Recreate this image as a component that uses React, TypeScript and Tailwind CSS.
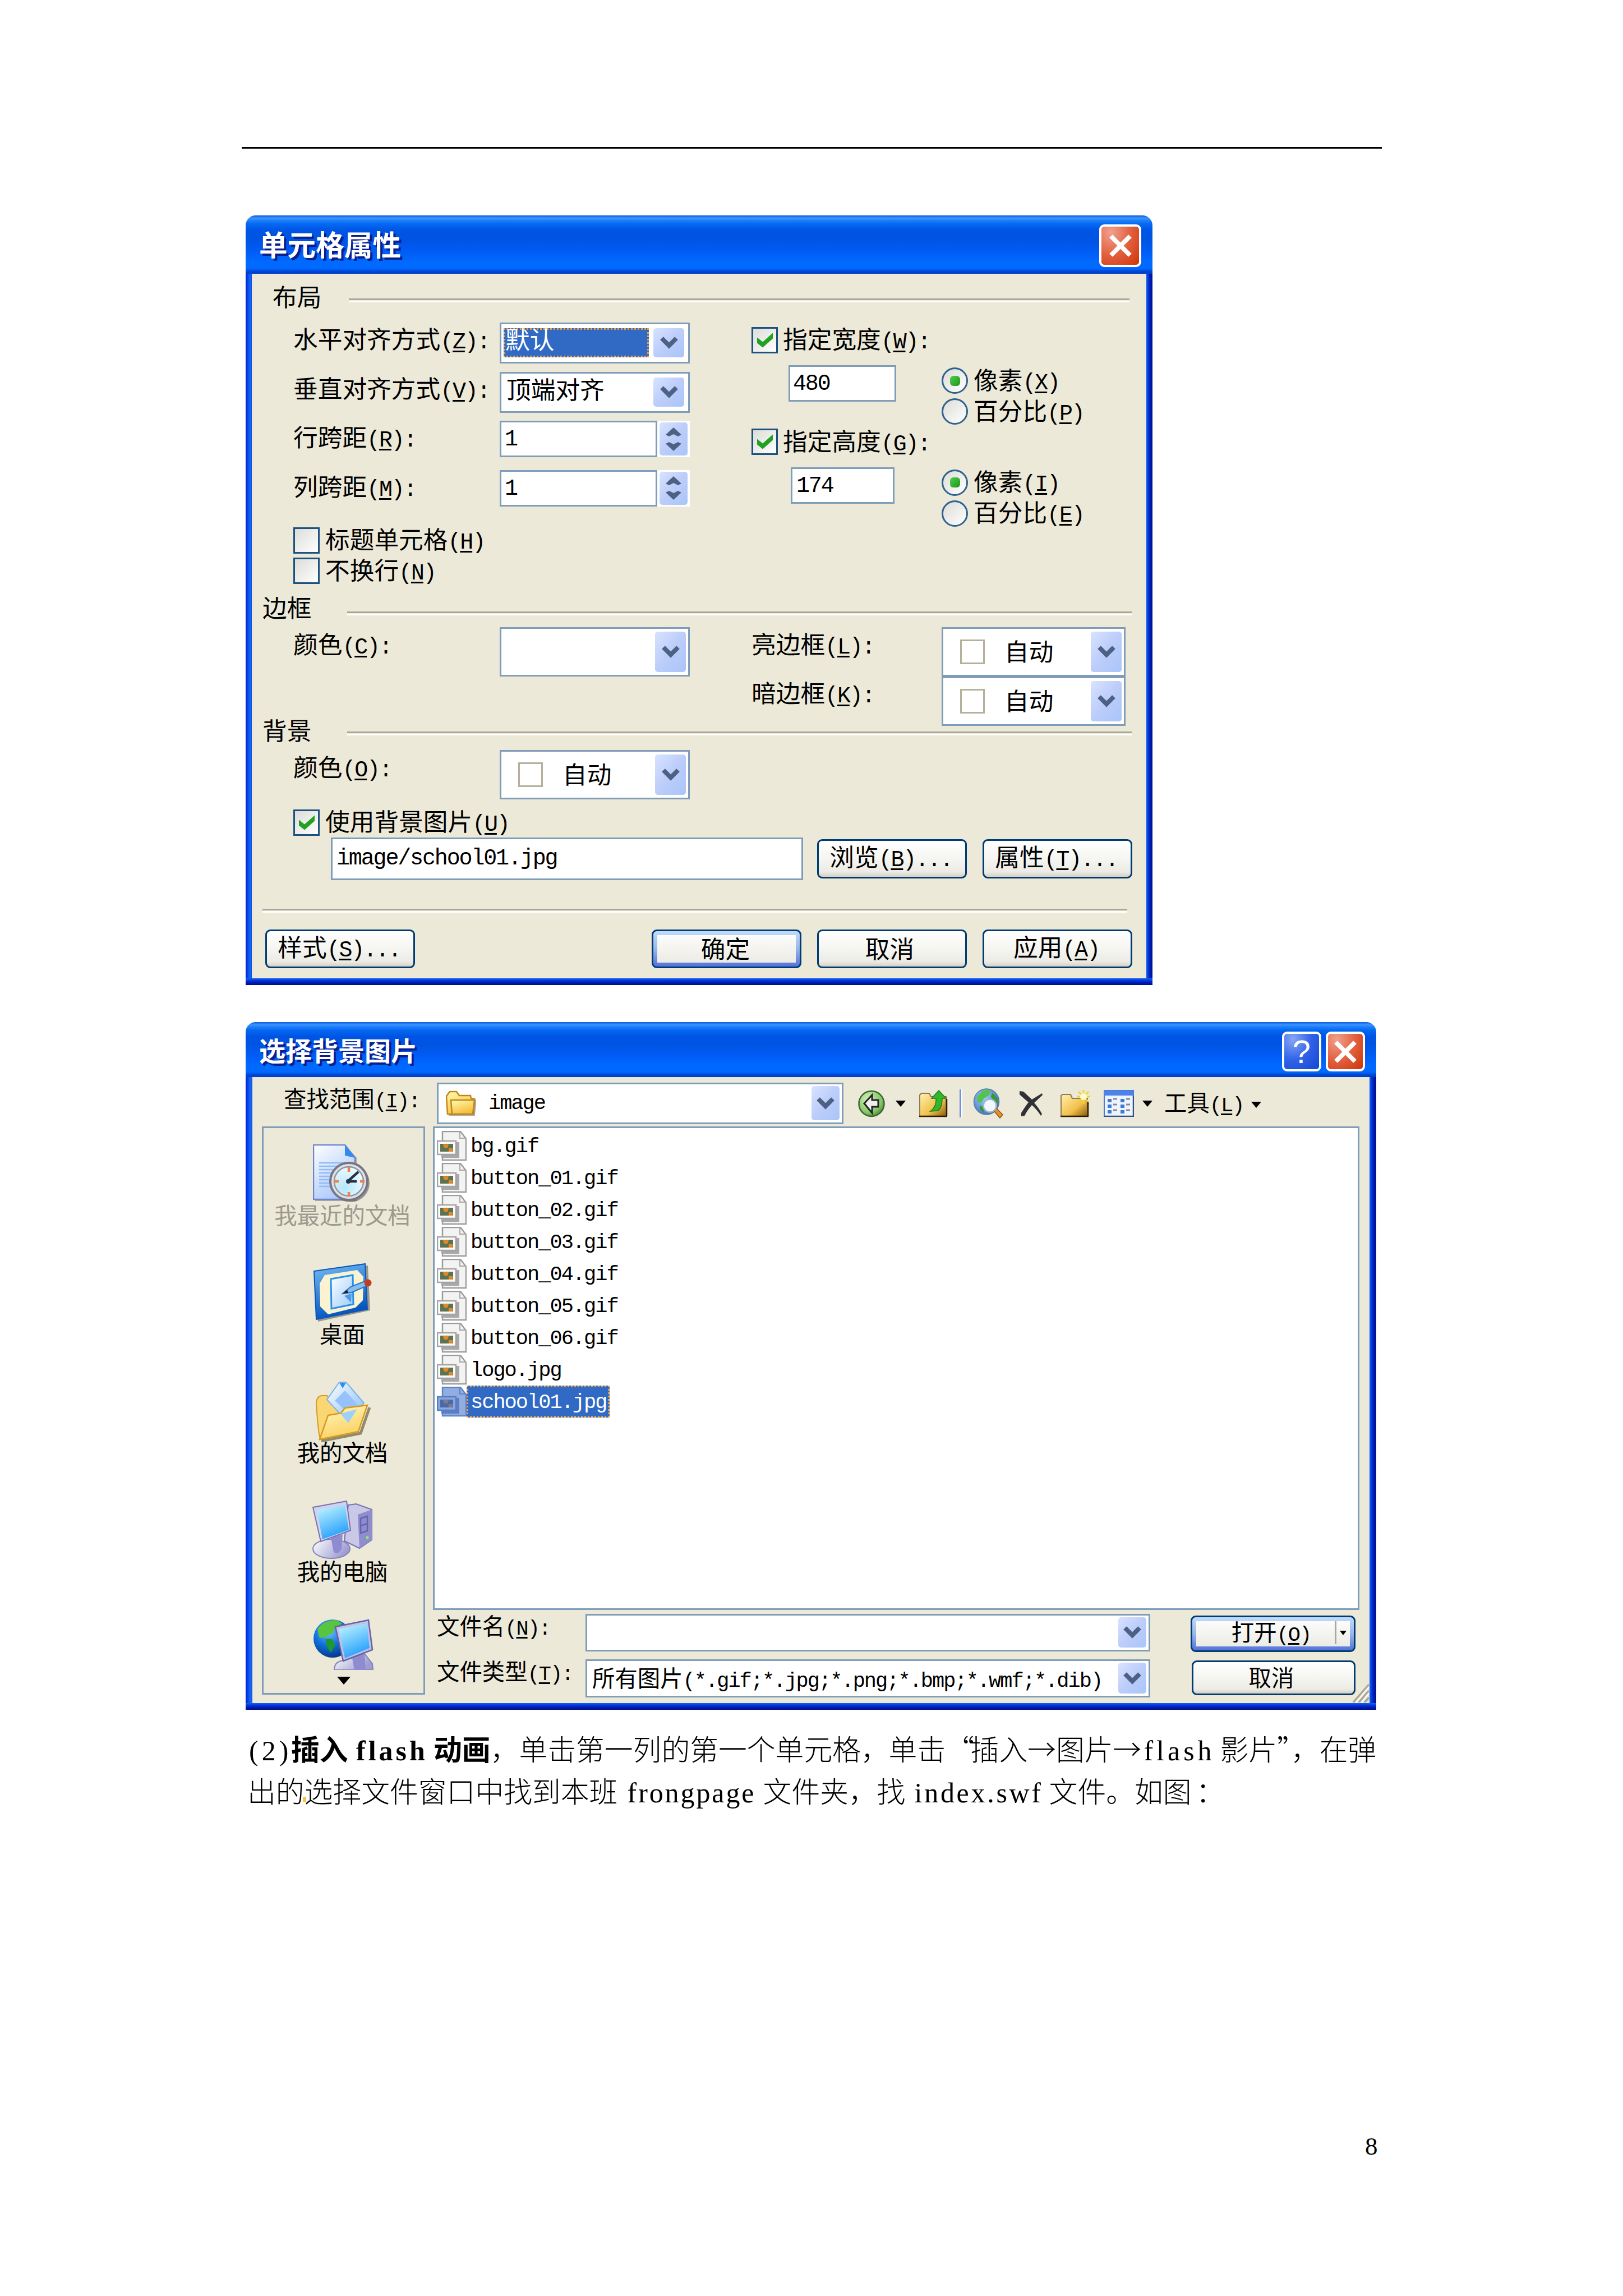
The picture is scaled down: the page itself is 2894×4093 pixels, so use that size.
import type { ReactNode } from "react";
import clsx from "clsx";

const MONO = "font-['Liberation_Mono','Noto_Sans_CJK_SC',monospace]";

/* Text: CJK glyphs stay full width, ASCII runs take half a cell each */

function Big({ children }: { children: string }) {
  return (
    <span className={clsx(MONO, "text-[40px] leading-none tracking-[-2.15px]")}>
      {children}
    </span>
  );
}

function Small({ children }: { children: string }) {
  return (
    <span className={clsx(MONO, "text-[37px] leading-none tracking-[-2px]")}>
      {children}
    </span>
  );
}

type LabelProps = {
  text: string;
  hotkey?: string;
  tail?: string;
  small?: boolean;
  className?: string;
};

function Label({ text, hotkey, tail = "", small, className }: LabelProps) {
  return (
    <span
      className={clsx(
        "shrink-0 whitespace-nowrap leading-none",
        small ? "text-[40.4px]" : "text-[43.7px]",
        className,
      )}
    >
      {text}
      {hotkey && (
        <span
          className={clsx(
            MONO,
            "leading-none",
            small
              ? "text-[37px] tracking-[-2px]"
              : "text-[40px] tracking-[-2.15px]",
          )}
        >
          (
          <span className="underline decoration-[3px] underline-offset-[4px]">
            {hotkey}
          </span>
          ){tail}
        </span>
      )}
    </span>
  );
}

/* Window chrome */

function CloseButton({ className }: { className: string }) {
  return (
    <div
      className={clsx(
        "flex items-center justify-center rounded-[9px] border-[4px] border-white bg-radial-[at_25%_15%] from-[#f0a08c] via-[#e2603f] to-[#cf3408]",
        className,
      )}
    >
      <svg viewBox="0 0 40 40" className="h-[40px] w-[40px]">
        <path d="M3 3 37 37M37 3 3 37" stroke="#fff" strokeWidth="8" />
      </svg>
    </div>
  );
}

type WindowProps = {
  title: ReactNode;
  buttons: ReactNode;
  className: string;
  titleClass: string;
  edgeClass: string;
  children: ReactNode;
};

function Window({
  title,
  buttons,
  className,
  titleClass,
  edgeClass,
  children,
}: WindowProps) {
  return (
    <section
      className={clsx(
        "flex flex-col overflow-hidden rounded-t-[18px] bg-[#ece9d8]",
        className,
      )}
    >
      <header
        className={clsx(
          "flex shrink-0 justify-between bg-[linear-gradient(180deg,#0a5be0_0%,#3b95ff_5%,#1d7dfb_9%,#0468f2_15%,#0054e3_26%,#0054e3_42%,#005cf6_62%,#006aff_80%,#0068ff_91%,#0046d4_96%,#003cc8_100%)] font-bold leading-none text-white",
          titleClass,
        )}
      >
        {title}
        {buttons}
      </header>
      <div className="flex min-h-0 flex-1">
        <div
          className={clsx(
            "shrink-0 bg-[linear-gradient(90deg,#0021d2,#0a4ae8_40%,#1768f6_75%,#0a50e0)]",
            edgeClass,
          )}
        />
        <div className="min-w-0 flex-1">{children}</div>
        <div
          className={clsx(
            "shrink-0 bg-[linear-gradient(90deg,#1460ee,#003de0_30%,#0019b0_65%,#00108c)]",
            edgeClass,
          )}
        />
      </div>
      <div className="h-[12px] shrink-0 bg-[linear-gradient(180deg,#1460ee,#003de0_30%,#0019b0_65%,#00108c)]" />
    </section>
  );
}

/* Controls */

function Rule({ className }: { className: string }) {
  return (
    <div
      className={clsx(
        "h-[7px] border-t-[3.5px] border-b-[3.5px] border-t-[#aca899] border-b-white",
        className,
      )}
    />
  );
}

function DropButton({ className }: { className: string }) {
  return (
    <div
      className={clsx(
        "flex shrink-0 items-center justify-center rounded-[5px] bg-linear-to-br from-[#d8e3ff] via-[#bccdfa] to-[#a9c5f9]",
        className,
      )}
    >
      <svg viewBox="0 0 32 22" className="h-[22px] w-[32px]">
        <path d="M3 3 16 16 29 3" fill="none" stroke="#4d6185" strokeWidth="8" />
      </svg>
    </div>
  );
}

function Combo({
  className,
  button,
  children,
}: {
  className: string;
  button: string;
  children?: ReactNode;
}) {
  return (
    <div
      className={clsx(
        "flex shrink-0 justify-between border-[3.5px] border-[#7f9db9] bg-white",
        className,
      )}
    >
      <div className="flex min-w-0 flex-1">{children}</div>
      <DropButton className={button} />
    </div>
  );
}

function AutoColor() {
  return (
    <>
      <div className="mt-[14px] ml-[30px] h-[44px] w-[44px] shrink-0 border-[3.5px] border-[#b5b09c]" />
      <Label text="自动" className="mt-[12px] ml-[35px]" />
    </>
  );
}

function Spinner() {
  return (
    <div className="flex h-[65px] w-[58px] flex-col bg-white px-[4px] py-[3px]">
      <div className="flex h-[59px] flex-col items-center justify-center gap-[10px] rounded-[5px] bg-linear-to-br from-[#d8e3ff] via-[#bccdfa] to-[#a9c5f9]">
        <svg viewBox="0 0 28 16" className="h-[16px] w-[28px]">
          <path d="M14 0 28 13 22 16 14 12 6 16 0 13Z" fill="#4d6185" />
        </svg>
        <svg viewBox="0 0 28 16" className="h-[16px] w-[28px]">
          <path d="M14 16 0 3 6 0 14 4 22 0 28 3Z" fill="#4d6185" />
        </svg>
      </div>
    </div>
  );
}

function Check({ checked }: { checked?: boolean }) {
  return (
    <div className="flex h-[47px] w-[47px] shrink-0 items-center justify-center border-[3.5px] border-[#1c5180] bg-linear-to-br from-[#dcdcd7] to-white">
      {checked && (
        <svg viewBox="0 0 28 26" className="h-[27px] w-[28px]">
          <path d="M0 8 10 16 28 0V10L10 26 0 18Z" fill="#21a121" />
        </svg>
      )}
    </div>
  );
}

function Radio({ checked }: { checked?: boolean }) {
  return (
    <div className="flex h-[47px] w-[47px] shrink-0 items-center justify-center rounded-full border-[3.5px] border-[#2f6291] bg-linear-to-br from-[#dcdcd7] to-white">
      {checked && (
        <div className="h-[18px] w-[18px] rounded-[6px] bg-linear-to-br from-[#4fce4c] to-[#1c951c]" />
      )}
    </div>
  );
}

function Button({
  className,
  primary,
  children,
}: {
  className: string;
  primary?: boolean;
  children: ReactNode;
}) {
  return (
    <div
      className={clsx(
        "flex shrink-0 items-center justify-center rounded-[9px] border-[3.5px] border-[#003c74]",
        primary
          ? "bg-linear-to-b from-[#c2dbfc] via-[#98b8ea] to-[#5572d8] p-[7px]"
          : "bg-[linear-gradient(180deg,#fff_0%,#f5f5f1_50%,#ecebe5_86%,#d6d0c5_100%)] pb-[4px]",
        className,
      )}
    >
      {primary ? (
        <div className="flex h-full w-full items-center justify-center bg-linear-to-b from-[#fcfcfb] to-[#ecebe5] pb-[4px]">
          {children}
        </div>
      ) : (
        children
      )}
    </div>
  );
}

/* Cell properties dialog */

function FieldRow({ label, hotkey, children }: { label: string; hotkey: string; children: ReactNode }) {
  return (
    <div className="flex h-[87.5px] items-start">
      <div className="flex h-[62px] w-[368px] items-center">
        <Label text={label} hotkey={hotkey} tail=":" />
      </div>
      {children}
    </div>
  );
}

function SizeBlock({
  label,
  hotkey,
  units,
  children,
}: {
  label: string;
  hotkey: string;
  units: [string, string];
  children: ReactNode;
}) {
  return (
    <div className="h-[181.5px]">
      <div className="flex h-[62px] items-center">
        <Check checked />
        <Label text={label} hotkey={hotkey} tail=":" className="ml-[9px]" />
      </div>
      <div className="mt-[14px] flex">
        <div className="w-[339px]">{children}</div>
        <div>
          <div className="flex h-[55px] items-center">
            <Radio checked />
            <Label text="像素" hotkey={units[0]} className="ml-[10px]" />
          </div>
          <div className="flex h-[55px] items-center">
            <Radio />
            <Label text="百分比" hotkey={units[1]} className="ml-[10px]" />
          </div>
        </div>
      </div>
    </div>
  );
}

function CellDialog() {
  return (
    <Window
      className="ml-[438px] h-[1372px] w-[1617px]"
      titleClass="h-[104px] pr-[20px] pl-[24px] pt-[16px]"
      edgeClass="w-[11px]"
      title={
        <h1 className="mt-[9px] text-[50.6px] [text-shadow:4px_4px_0_#0a1f8f]">
          单元格属性
        </h1>
      }
      buttons={<CloseButton className="h-[76px] w-[75px]" />}
    >
      <div className="flex h-[84px] items-center pl-[37px]">
        <Label text="布局" className="mb-[5px] w-[136px]" />
        <Rule className="mt-[10px] w-[1392px]" />
      </div>

      <div className="flex h-[479px] pt-[3px] pl-[74px]">
        <div className="w-[817px]">
          <FieldRow label="水平对齐方式" hotkey="Z">
            <Combo
              className="h-[73px] w-[339px] p-[7px] pl-[4px]"
              button="w-[55px] h-[52px]"
            >
              <div className="h-[52px] w-[259px] border-[3px] border-dotted border-[#e8a040] bg-[#316ac5] text-white">
                <Label text="默认" className="-mt-[6px] block" />
              </div>
            </Combo>
          </FieldRow>
          <FieldRow label="垂直对齐方式" hotkey="V">
            <Combo
              className="h-[73px] w-[339px] p-[7px] pl-[9px]"
              button="w-[55px] h-[52px]"
            >
              <Label text="顶端对齐" className="-mt-[2px]" />
            </Combo>
          </FieldRow>
          <FieldRow label="行跨距" hotkey="R">
            <div className="flex h-[65px] w-[281px] items-center border-[3.5px] border-[#7f9db9] bg-white pt-[3px] pl-[6px]">
              <Big>1</Big>
            </div>
            <Spinner />
          </FieldRow>
          <FieldRow label="列跨距" hotkey="M">
            <div className="flex h-[65px] w-[281px] items-center border-[3.5px] border-[#7f9db9] bg-white pt-[3px] pl-[6px]">
              <Big>1</Big>
            </div>
            <Spinner />
          </FieldRow>
          <div className="mt-[11px] flex h-[54.5px] items-center">
            <Check />
            <Label text="标题单元格" hotkey="H" className="ml-[10px]" />
          </div>
          <div className="flex h-[54.5px] items-center">
            <Check />
            <Label text="不换行" hotkey="N" className="ml-[10px]" />
          </div>
        </div>
        <div>
          <SizeBlock label="指定宽度" hotkey="W" units={["X", "P"]}>
            <div className="ml-[66px] flex h-[65px] w-[192px] items-center border-[3.5px] border-[#7f9db9] bg-white pt-[3px] pl-[5px]">
              <Big>480</Big>
            </div>
          </SizeBlock>
          <SizeBlock label="指定高度" hotkey="G" units={["I", "E"]}>
            <div className="ml-[70px] flex h-[65px] w-[185px] items-center border-[3.5px] border-[#7f9db9] bg-white pt-[3px] pl-[7px]">
              <Big>174</Big>
            </div>
          </SizeBlock>
        </div>
      </div>

      <div className="mt-[4px] flex h-[57px] items-center pl-[19px]">
        <Label text="边框" className="mb-[4px] w-[151px]" />
        <Rule className="mt-[19px] w-[1399px]" />
      </div>
      <div className="mt-[6px] flex h-[156px] pl-[74px]">
        <div className="flex h-[64px] w-[368px] items-center">
          <Label text="颜色" hotkey="C" tail=":" />
        </div>
        <Combo
          className="h-[88px] w-[339px] py-[4.5px] pr-[4px]"
          button="w-[55px] h-[72px]"
        />
        <div className="ml-[110px] w-[339px]">
          <div className="flex h-[64px] items-center">
            <Label text="亮边框" hotkey="L" tail=":" />
          </div>
          <div className="mt-[23px] flex h-[64px] items-center">
            <Label text="暗边框" hotkey="K" tail=":" />
          </div>
        </div>
        <div>
          <Combo
            className="h-[88px] w-[328px] py-[4.5px] pr-[4px]"
            button="w-[55px] h-[72px]"
          >
            <AutoColor />
          </Combo>
          <Combo
            className="h-[88px] w-[328px] py-[4.5px] pr-[4px]"
            button="w-[55px] h-[72px]"
          >
            <AutoColor />
          </Combo>
        </div>
      </div>

      <div className="flex h-[57px] items-center pl-[19px]">
        <Label text="背景" className="mb-[4px] w-[151px]" />
        <Rule className="mt-[10px] w-[1399px]" />
      </div>
      <div className="mt-[6px] flex h-[102px] pl-[74px]">
        <div className="flex h-[64px] w-[368px] items-center">
          <Label text="颜色" hotkey="O" tail=":" />
        </div>
        <Combo
          className="h-[88px] w-[339px] py-[4.5px] pr-[4px]"
          button="w-[55px] h-[72px]"
        >
          <AutoColor />
        </Combo>
      </div>
      <div className="flex h-[54px] items-center pl-[74px]">
        <Check checked />
        <Label text="使用背景图片" hotkey="U" className="ml-[10px]" />
      </div>
      <div className="flex h-[76px] items-center pl-[141px]">
        <div className="flex h-[76px] w-[842px] items-center border-[3.5px] border-[#7f9db9] bg-white pl-[7px]">
          <Big>image/school01.jpg</Big>
        </div>
        <Button className="ml-[25px] h-[70px] w-[267px]">
          <Label text="浏览" hotkey="B" tail="..." className="mr-[4px]" />
        </Button>
        <Button className="ml-[28px] h-[70px] w-[267px]">
          <Label text="属性" hotkey="T" tail="..." className="mr-[4px]" />
        </Button>
      </div>

      <Rule className="mt-[51px] ml-[19px] w-[1542px]" />
      <div className="mt-[30px] flex pl-[24px]">
        <Button className="h-[69px] w-[267px]">
          <Label text="样式" hotkey="S" tail="..." className="mr-[4px]" />
        </Button>
        <Button primary className="ml-[422px] h-[69px] w-[267px]">
          <Label text="确定" className="mr-[4px]" />
        </Button>
        <Button className="ml-[28px] h-[69px] w-[267px]">
          <Label text="取消" className="mr-[8px]" />
        </Button>
        <Button className="ml-[28px] h-[69px] w-[267px]">
          <Label text="应用" hotkey="A" className="mr-[4px]" />
        </Button>
      </div>
    </Window>
  );
}

/* Places bar icons */

function RecentIcon() {
  return (
    <svg viewBox="0 0 108 104" className="h-[104px] w-[108px]">
      <defs>
        <linearGradient id="recentPage" x1="0" y1="0" x2="0.6" y2="1">
          <stop offset="0" stopColor="#fff" />
          <stop offset="1" stopColor="#a9c6fb" />
        </linearGradient>
        <radialGradient id="recentFace" cx="0.35" cy="0.7" r="0.8">
          <stop offset="0" stopColor="#b5e6fb" />
          <stop offset="1" stopColor="#f7fdff" />
        </radialGradient>
      </defs>
      <path d="M4 4H60L78 24V101H4Z" fill="#5c5c66" opacity="0.45" />
      <path d="M1 1H57L75 24V98H1Z" fill="url(#recentPage)" stroke="#6f83cf" strokeWidth="2.5" />
      <path d="M57 1 75 24 57 20Z" fill="#2d8cf0" />
      <path d="M11 33H58M11 39H55M11 45H50M11 51H42M11 57H38M11 63H34M11 69H32M11 75H31" stroke="#8fbcf7" strokeWidth="2.6" />
      <circle cx="67" cy="69" r="34" fill="#50505a" opacity="0.55" />
      <circle cx="64" cy="66" r="33" fill="#dfe0e6" stroke="#74757f" strokeWidth="4" />
      <circle cx="64" cy="66" r="26" fill="url(#recentFace)" stroke="#8b97a5" strokeWidth="2.5" />
      <path d="M64 41V49M64 85V93M37 66H46M84 66H92" stroke="#f08048" strokeWidth="4.5" />
      <path d="M62 66 81 49M62 66H78" stroke="#263445" strokeWidth="4.5" />
      <circle cx="63" cy="66" r="4" fill="#263445" />
    </svg>
  );
}

function DesktopIcon() {
  return (
    <svg viewBox="0 0 108 104" className="h-[104px] w-[108px]">
      <defs>
        <linearGradient id="deskBlue" x1="0" y1="0" x2="0.3" y2="1">
          <stop offset="0" stopColor="#74bdf5" />
          <stop offset="1" stopColor="#0553bd" />
        </linearGradient>
        <linearGradient id="deskPage" x1="0" y1="0" x2="1" y2="1">
          <stop offset="0" stopColor="#fff" />
          <stop offset="1" stopColor="#9ccbfb" />
        </linearGradient>
      </defs>
      <path d="M5 16 97 4 101 84 8 104Z" fill="#333" opacity="0.45" />
      <path d="M1 14 92 1 96 82 5 100Z" fill="url(#deskBlue)" stroke="#0b56b8" strokeWidth="2" />
      <path d="M20 21 78 12 89 24 88 66 75 79 26 91 12 77 11 36Z" fill="#fbf3cf" />
      <path d="M31 28 70 21 71 73 32 81Z" fill="url(#deskPage)" stroke="#2490ee" strokeWidth="3" />
      <path d="M52 54 66 42 94 31 98 39 68 52Z" fill="#86bdf0" stroke="#2c75c2" strokeWidth="2" />
      <path d="M52 54 60 47 62 53Z" fill="#222" />
      <path d="M55 58 68 54 67 70Z" fill="#4c9bea" />
      <circle cx="97" cy="35" r="6.5" fill="#c23c20" />
    </svg>
  );
}

function DocumentsIcon() {
  return (
    <svg viewBox="0 0 98 108" className="h-[108px] w-[98px]">
      <defs>
        <linearGradient id="docsFront" x1="0" y1="0" x2="0.4" y2="1">
          <stop offset="0" stopColor="#fffac2" />
          <stop offset="1" stopColor="#fbd061" />
        </linearGradient>
        <linearGradient id="docsPage" x1="0" y1="0" x2="1" y2="1">
          <stop offset="0" stopColor="#fff" />
          <stop offset="1" stopColor="#7fb9f8" />
        </linearGradient>
      </defs>
      <path d="M10 106 80 92 96 46" fill="none" stroke="#4a3d10" strokeWidth="5" opacity="0.55" />
      <path d="M1 38Q2 26 10 25H20L44 56 8 102Q4 90 1 38Z" fill="#fbd773" stroke="#d69a1e" strokeWidth="2" />
      <path d="M42 1H54L86 38 58 74 20 32Z" fill="url(#docsPage)" stroke="#7fb0ea" strokeWidth="2" />
      <path d="M42 2H54L48 12Z" fill="#2790f4" />
      <path d="M52 16 76 42 60 58 34 34Z" fill="#95c2fa" />
      <path d="M22 60 45 56 52 47 92 42 76 89 7 103Z" fill="url(#docsFront)" stroke="#d69a1e" strokeWidth="2.5" />
      <path d="M44 57 74 49 58 74Z" fill="#9fd0f8" />
    </svg>
  );
}

function ComputerIcon() {
  return (
    <svg viewBox="0 0 110 106" className="h-[106px] w-[110px]">
      <defs>
        <linearGradient id="pcScreen" x1="0.2" y1="0" x2="0.6" y2="1">
          <stop offset="0" stopColor="#bdf3ff" />
          <stop offset="1" stopColor="#1f9cfb" />
        </linearGradient>
        <linearGradient id="pcBase" x1="0" y1="0" x2="1" y2="0.4">
          <stop offset="0" stopColor="#fff" />
          <stop offset="1" stopColor="#9d9cd4" />
        </linearGradient>
      </defs>
      <path d="M64 8 78 6 106 16V70L84 85 57 72Z" fill="#c9c8e6" stroke="#7472b4" strokeWidth="2" />
      <path d="M81 25 106 16V70L84 85Z" fill="#8f8dcc" />
      <path d="M86 32 98 28V54L86 58ZM86 45 98 41" fill="none" stroke="#6664ae" strokeWidth="2.5" />
      <circle cx="98" cy="66" r="2.5" fill="#8cf06a" />
      <ellipse cx="34" cy="86" rx="33" ry="17" fill="url(#pcBase)" stroke="#8583b5" strokeWidth="2" />
      <path d="M33 66 54 60 52 86Q46 98 38 92Z" fill="#8e8cce" />
      <path d="M1 12 61 1 68 53 15 73Z" fill="#d3d2ec" stroke="#7472b4" strokeWidth="2" />
      <path d="M8 17 58 8 65 52 18 69Z" fill="url(#pcScreen)" />
    </svg>
  );
}

function NetworkIcon() {
  return (
    <svg viewBox="0 0 110 91" className="h-[91px] w-[110px] shrink-0">
      <defs>
        <radialGradient id="netGlobe" cx="0.4" cy="0.3" r="0.75">
          <stop offset="0" stopColor="#7cc7fb" />
          <stop offset="0.5" stopColor="#1272dd" />
          <stop offset="1" stopColor="#03317f" />
        </radialGradient>
      </defs>
      <circle cx="35" cy="35" r="34" fill="url(#netGlobe)" />
      <path d="M8 18Q20 2 42 2L52 8 40 16 34 26 22 32 12 34Z" fill="#57c53e" />
      <path d="M22 36 34 36 40 46 32 60 26 52Z" fill="#1c9a2c" />
      <path d="M38 91Q38 76 54 74L92 62 106 80 107 91Z" fill="url(#pcBase)" stroke="#8583b5" strokeWidth="2" />
      <path d="M70 70 92 62 94 91H74Z" fill="#8e8cce" />
      <path d="M40 14 99 2 106 55 54 75Z" fill="#c3c2e2" stroke="#6462a8" strokeWidth="2.5" />
      <path d="M46 18 96 8 101 52 57 70Z" fill="url(#pcScreen)" />
    </svg>
  );
}

function ImageFileIcon({ selected }: { selected?: boolean }) {
  return (
    <svg viewBox="0 0 53 54" className="h-[54px] w-[53px] shrink-0">
      <path
        d="M10 1H42L52 14V52H10Z"
        fill={selected ? "#93ade0" : "#f3f3f3"}
        stroke={selected ? "#5f83cb" : "#9b9b9b"}
        strokeWidth="2.5"
      />
      <path d="M41 1V13H52" fill="none" stroke={selected ? "#5f83cb" : "#a8a8a8"} strokeWidth="2" />
      <path d="M8 20H40V48H8Z" fill={selected ? "#5c7fc4" : "#a8a8a8"} />
      <path
        d="M1 18H34V42H1Z"
        fill={selected ? "#8ba6dc" : "#fafafa"}
        stroke={selected ? "#557cc8" : "#a3a3a3"}
        strokeWidth="2.5"
      />
      <path d="M6 23H29V37H6Z" fill={selected ? "#4a6aa6" : "#5d7350"} />
      <path d="M11 24H21L19 30H13ZM21 31H28V37H21Z" fill={selected ? "#7d7b93" : "#e6882a"} />
    </svg>
  );
}

/* Toolbar icons */

function FolderIcon() {
  return (
    <svg viewBox="0 0 54 46" className="h-[46px] w-[54px]">
      <defs>
        <linearGradient id="folderFill" x1="0" y1="0" x2="0.5" y2="1">
          <stop offset="0" stopColor="#fffdb0" />
          <stop offset="1" stopColor="#f5bd3c" />
        </linearGradient>
      </defs>
      <path d="M5 43H50L53 16" fill="none" stroke="#555" strokeWidth="4" opacity="0.5" />
      <path d="M1 10 7 2H19L24 9H44L45 14 51 15 49 42H3Z" fill="url(#folderFill)" stroke="#c1861a" strokeWidth="2.5" />
      <path d="M9 17H51L48 42H11Z" fill="url(#folderFill)" stroke="#c1861a" strokeWidth="2.5" />
    </svg>
  );
}

function Caret({ className }: { className?: string }) {
  return (
    <svg viewBox="0 0 18 11" className={clsx("h-[11px] w-[18px] shrink-0", className)}>
      <path d="M0 0H18L9 11Z" fill="#000" />
    </svg>
  );
}

function BackIcon() {
  return (
    <svg viewBox="0 0 48 49" className="h-[49px] w-[48px] shrink-0">
      <defs>
        <radialGradient id="backFill" cx="0.35" cy="0.3" r="0.8">
          <stop offset="0" stopColor="#cdf0b4" />
          <stop offset="0.7" stopColor="#82c566" />
          <stop offset="1" stopColor="#3f7a30" />
        </radialGradient>
      </defs>
      <circle cx="24" cy="24.5" r="22.5" fill="url(#backFill)" stroke="#3b6633" strokeWidth="2.5" />
      <path d="M11 24 25 9V18H36V30H25V41Z" fill="#eee" stroke="#222" strokeWidth="3" />
    </svg>
  );
}

function UpIcon() {
  return (
    <svg viewBox="0 0 52 49" className="h-[49px] w-[52px] shrink-0">
      <defs>
        <linearGradient id="toolFolder" x1="0" y1="0" x2="1" y2="1">
          <stop offset="0" stopColor="#fff0b0" />
          <stop offset="0.6" stopColor="#f1c04a" />
          <stop offset="1" stopColor="#8a5a08" />
        </linearGradient>
      </defs>
      <path d="M2 47V9L5 6H19L22 12H49V47Z" fill="url(#toolFolder)" stroke="#8f7a55" strokeWidth="2" />
      <path d="M1 47H51M50 16V47" stroke="#2a1a08" strokeWidth="2.5" />
      <path d="M36 1 49 15H42Q42 32 34 37L21 38Q32 30 31 15H23Z" fill="#33b52c" stroke="#1b7d1c" strokeWidth="1.5" />
    </svg>
  );
}

function SearchWebIcon() {
  return (
    <svg viewBox="0 0 54 54" className="h-[54px] w-[54px] shrink-0">
      <defs>
        <radialGradient id="webFill" cx="0.4" cy="0.35" r="0.75">
          <stop offset="0" stopColor="#9cd2fa" />
          <stop offset="1" stopColor="#3a68c0" />
        </radialGradient>
      </defs>
      <ellipse cx="24" cy="24" rx="22.5" ry="23" fill="url(#webFill)" stroke="#5c7a9c" strokeWidth="1.5" />
      <path d="M8 14 18 4 32 3 28 13 20 18 14 26 7 24Z" fill="#55c24b" />
      <path d="M34 8 43 16 45 28 36 22 32 15ZM12 30 18 34 20 44 12 38Z" fill="#359a3a" />
      <path d="M37 40 42 36 53 47 48 53Z" fill="#e0912f" stroke="#8f5310" strokeWidth="1.5" />
      <circle cx="30" cy="31" r="11.5" fill="#f1f7ff" stroke="#a3b4c8" strokeWidth="2.5" />
    </svg>
  );
}

function DeleteIcon() {
  return (
    <svg viewBox="0 0 44 47" className="h-[47px] w-[44px] shrink-0">
      <path d="M1 1 8 2 23 16 41 5 42 8 27 22Q36 32 41 42L39 45Q32 34 23 26 14 36 10 45L4 46 4 40Q12 27 17 21 6 12 1 7Z" fill="#2e3135" />
    </svg>
  );
}

function NewFolderIcon() {
  return (
    <svg viewBox="0 0 54 49" className="h-[49px] w-[54px] shrink-0">
      <path d="M2 47V10L5 8H19L22 15H49V47Z" fill="url(#toolFolder)" stroke="#8f7a55" strokeWidth="2" />
      <path d="M1 47H51M50 22V47" stroke="#2a1a08" strokeWidth="2.5" />
      <path d="M42 0V25M30 12H54M33 3 51 21M51 3 33 21" stroke="#f3cf3a" strokeWidth="3" />
      <circle cx="42" cy="12" r="6" fill="#fffbd0" />
    </svg>
  );
}

function ViewsIcon() {
  const cells = [16, 26, 36];
  return (
    <svg viewBox="0 0 54 48" className="h-[48px] w-[54px] shrink-0">
      <rect x="1" y="1" width="52" height="46" fill="#eef4ff" stroke="#4c78d0" strokeWidth="2" />
      <rect x="1" y="1" width="52" height="9" fill="#4c82ea" />
      <path d="M0 47H54M53 10V47" stroke="#32508c" strokeWidth="2.5" />
      {cells.map((y) => (
        <g key={y}>
          <path d={`M7 ${y + 6}V${y}H14V${y + 6}ZM30 ${y + 6}V${y}H37V${y + 6}Z`} fill="#3c78d8" />
          <path d={`M17 ${y}H24M40 ${y}H47`} stroke="#888" strokeWidth="3" />
        </g>
      ))}
    </svg>
  );
}

/* File picker dialog */

const places = [
  { label: "我最近的文档", icon: RecentIcon, muted: true },
  { label: "桌面", icon: DesktopIcon },
  { label: "我的文档", icon: DocumentsIcon },
  { label: "我的电脑", icon: ComputerIcon },
];

const files = [
  "bg.gif",
  "button_01.gif",
  "button_02.gif",
  "button_03.gif",
  "button_04.gif",
  "button_05.gif",
  "button_06.gif",
  "logo.jpg",
  "school01.jpg",
];

const selectedFile = "school01.jpg";

function FileDialog() {
  return (
    <Window
      className="mt-[66px] ml-[438px] h-[1226px] w-[2016px]"
      titleClass="h-[98px] pr-[20px] pl-[24px] pt-[17px]"
      edgeClass="w-[12px]"
      title={
        <h1 className="mt-[8px] text-[47px] [text-shadow:4px_4px_0_#0a1f8f]">
          选择背景图片
        </h1>
      }
      buttons={
        <div className="flex gap-[8px]">
          <div className="flex h-[71px] w-[70px] items-center justify-center rounded-[9px] border-[4px] border-white bg-radial-[at_25%_15%] from-[#87a6f5] via-[#2f62e8] to-[#1646d0] font-['Liberation_Sans',sans-serif] text-[58px] font-normal">
            ?
          </div>
          <CloseButton className="h-[71px] w-[70px]" />
        </div>
      }
    >
      <div className="flex h-[88px] pl-[56px]">
        <div className="flex h-[80px] w-[273px] items-center">
          <Label small text="查找范围" hotkey="I" tail=":" />
        </div>
        <Combo
          className="mt-[10px] h-[74px] w-[725px] py-[3px] pr-[4px]"
          button="w-[50px] h-[61px]"
        >
          <div className="flex items-center pl-[13px]">
            <FolderIcon />
            <span className="ml-[22px]">
              <Small>image</Small>
            </span>
          </div>
        </Combo>
        <div className="flex h-[94px] items-center">
          <div className="flex w-[111px] items-center gap-[19px] pl-[26px]">
            <BackIcon />
            <Caret />
          </div>
          <div className="ml-[23px]">
            <UpIcon />
          </div>
          <div className="ml-[21px] h-[50px] w-[5px] border-r-2 border-r-white bg-[#6f93dc]" />
          <div className="ml-[19px]">
            <SearchWebIcon />
          </div>
          <div className="ml-[28px]">
            <DeleteIcon />
          </div>
          <div className="ml-[29px]">
            <NewFolderIcon />
          </div>
          <div className="ml-[24px]">
            <ViewsIcon />
          </div>
          <Caret className="ml-[15px]" />
          <Label small text="工具" hotkey="L" className="ml-[21px]" />
          <Caret className="mt-[4px] ml-[14px]" />
        </div>
      </div>

      <div className="flex pl-[17px]">
        <aside className="flex h-[1013px] w-[291px] flex-col items-center border-[3.5px] border-[#7f9db9] pt-[29px]">
          {places.map(({ label, icon: Icon, muted }) => (
            <div key={label} className="flex h-[211.5px] shrink-0 flex-col items-center">
              <div className="h-[104px]">
                <Icon />
              </div>
              <Label small text={label} className={clsx("mt-[1px] mr-[4px]", muted && "text-[#9c998d]")} />
            </div>
          ))}
          <NetworkIcon />
          <svg viewBox="0 0 24 14" className="mt-[12px] h-[14px] w-[24px] shrink-0">
            <path d="M0 0H24L12 14Z" fill="#000" />
          </svg>
        </aside>

        <div className="ml-[14px] w-[1652px]">
          <ul className="h-[862px] border-[3.5px] border-[#7f9db9] bg-white pt-[3px] pl-[4px]">
            {files.map((name) => (
              <li key={name} className="flex h-[57.06px] items-center">
                <ImageFileIcon selected={name === selectedFile} />
                <span
                  className={clsx(
                    "flex h-[57px] items-center border-[3px] pt-[4px] pr-[3px] pl-[4px]",
                    name === selectedFile
                      ? "border-dotted border-[#e8a040] bg-[#316ac5] text-white"
                      : "border-transparent",
                  )}
                >
                  <Small>{name}</Small>
                </span>
              </li>
            ))}
          </ul>
          <div className="mt-[7px] flex h-[81px] pl-[7px]">
            <div className="flex h-[46px] w-[265px] shrink-0 items-center">
              <Label small text="文件名" hotkey="N" tail=":" />
            </div>
            <Combo
              className="h-[67px] w-[1007px] py-[3px] pr-[4px]"
              button="w-[50px] h-[54px]"
            />
            <Button primary className="mt-[3px] ml-[72px] h-[65px] w-[294px]">
              <div className="flex flex-1 justify-center">
                <Label small text="打开" hotkey="O" className="ml-[20px]" />
              </div>
              <div className="flex h-full w-[27px] items-center justify-center border-l-[3px] border-[#aca899]">
                <svg viewBox="0 0 12 8" className="h-[8px] w-[12px]">
                  <path d="M0 0H12L6 8Z" fill="#000" />
                </svg>
              </div>
            </Button>
          </div>
          <div className="flex pl-[7px]">
            <div className="flex h-[46px] w-[265px] shrink-0 items-center">
              <Label small text="文件类型" hotkey="T" tail=":" />
            </div>
            <Combo
              className="h-[68px] w-[1007px] py-[3px] pr-[4px]"
              button="w-[50px] h-[55px]"
            >
              <span className="mt-[6px] ml-[9px] whitespace-nowrap text-[40.4px] leading-none">
                所有图片
                <Small>(*.gif;*.jpg;*.png;*.bmp;*.wmf;*.dib)</Small>
              </span>
            </Combo>
            <Button className="mt-[2px] ml-[74px] h-[62px] w-[292px]">
              <Label small text="取消" className="mr-[8px]" />
            </Button>
            {/* resize grip */}
            <svg viewBox="0 0 30 34" className="mt-[43px] -ml-[6px] h-[34px] w-[30px] shrink-0">
              <path d="M2 34 30 2M12 34 30 13M22 34 30 25" stroke="#aca899" strokeWidth="4" />
              <path d="M6 34 30 6M16 34 30 17" stroke="#fff" strokeWidth="2" />
            </svg>
          </div>
        </div>
      </div>
    </Window>
  );
}

function Latin({ className, children }: { className: string; children: string }) {
  return (
    <span
      className={clsx(
        "inline-block shrink-0 font-['Liberation_Serif',serif] text-[50px]",
        className,
      )}
    >
      {children}
    </span>
  );
}

export default function App() {
  return (
    <main className="h-[4093px] w-[2894px] overflow-hidden bg-white font-['Noto_Sans_CJK_SC',sans-serif] text-black">
      <div className="ml-[431px] h-[265px] w-[2033px] border-b-[3px] border-black" />
      <div className="h-[119px]" />
      <CellDialog />
      <FileDialog />

      <article className="mt-[31px] ml-[441px] w-[2044px] text-[50.8px] leading-[75px] font-light whitespace-nowrap">
        <p className="flex h-[75px] items-baseline">
          <Latin className="w-[78px] pl-[3px] tracking-[6px]">(2)</Latin>
          <b className="w-[116px] font-bold">插入</b>
          <Latin className="w-[138px] font-bold tracking-[5px]">flash</Latin>
          <b className="font-bold">动画</b>
          <span className="w-[710px]">，单击第一列的第一个单元格，</span>
          <span className="w-[102px]">单击</span>
          <span className="w-[44px] text-right">“</span>
          <span>插入→图片→</span>
          <Latin className="w-[140px] pl-[4px] tracking-[6px]">flash</Latin>
          <span>影片</span>
          <span className="w-[25px]">”</span>
          <span>，在弹</span>
        </p>
        <p className="flex h-[75px] items-baseline">
          <span>出的</span>
          <span className="-mr-[3px] -ml-[3px] h-[9px] w-[6px] self-center bg-[#f5c842] mt-[31px]" />
          <span className="w-[576px]">选择文件窗口中找到本班</span>
          <Latin className="w-[242px] tracking-[2.9px]">frongpage</Latin>
          <span className="w-[203px]">文件夹，</span>
          <span className="w-[67px]">找</span>
          <Latin className="w-[240px] tracking-[3.7px]">index.swf</Latin>
          <span>文件。如图</span>
          <span className="ml-[8px]">：</span>
        </p>
      </article>

      <footer className="mt-[575px] ml-[2434px] font-['Liberation_Serif',serif] text-[45px] leading-none">
        8
      </footer>
    </main>
  );
}
